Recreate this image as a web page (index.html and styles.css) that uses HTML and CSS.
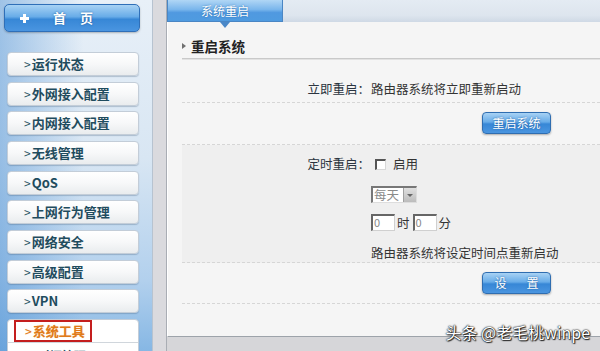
FILE: index.html
```html
<!DOCTYPE html>
<html lang="zh-CN">
<head>
<meta charset="utf-8">
<title>系统重启</title>
<link rel="stylesheet" href="styles.css">
</head>
<body>
<div class="page">
  <aside class="sidebar">
    <div class="home"><span class="plus"></span><span class="home-text">首<span class="sp"></span>页</span></div>
    <ul class="menu">
      <li class="item"><span class="arr">&gt;</span>运行状态</li>
      <li class="item"><span class="arr">&gt;</span>外网接入配置</li>
      <li class="item"><span class="arr">&gt;</span>内网接入配置</li>
      <li class="item"><span class="arr">&gt;</span>无线管理</li>
      <li class="item"><span class="arr">&gt;</span>QoS</li>
      <li class="item"><span class="arr">&gt;</span>上网行为管理</li>
      <li class="item"><span class="arr">&gt;</span>网络安全</li>
      <li class="item"><span class="arr">&gt;</span>高级配置</li>
      <li class="item"><span class="arr">&gt;</span>VPN</li>
      <li class="item item-open">
        <div class="open-head"><span class="hl"><span class="arr">&gt;</span>系统工具</span></div>
        <div class="sub">时间管理</div>
      </li>
    </ul>
  </aside>
  <div class="gutter"></div>
  <main class="main">
    <div class="topbar"><div class="tab">系统重启</div><span class="tab-tip"></span></div>
    <div class="panel">
      <h2 class="heading"><span class="tri"></span>重启系统</h2>
      <div class="row row-a"><span class="label">立即重启：</span><span class="value">路由器系统将立即重新启动</span></div>
      <div class="row row-btn"><span class="label"></span><span class="value"><span class="btn">重启系统</span></span></div>
      <div class="row row-c">
        <span class="label lbl-c">定时重启：</span>
        <div class="value col">
          <div class="line"><span class="check"></span>启用</div>
          <div class="select"><span class="sel-text">每天</span><span class="sel-btn"><span class="sel-arr"></span></span></div>
          <div class="line times"><span class="inp">0</span>时<span class="inp">0</span>分</div>
          <div class="line note">路由器系统将设定时间点重新启动</div>
        </div>
      </div>
      <div class="row row-btn row-d"><span class="label"></span><span class="value"><span class="btn btn-wide">设<span class="bsp"></span>置</span></span></div>
      <div class="mark">头条 @老毛桃winpe</div>
    </div>
    <div class="foot"></div>
  </main>
</div>
</body>
</html>
```
FILE: styles.css
```css
* { box-sizing: border-box; }
html, body { margin: 0; padding: 0; }
body {
  width: 600px;
  height: 351px;
  overflow: hidden;
  font-family: "Noto Sans CJK SC", "Liberation Sans", sans-serif;
  font-size: 12.5px;
  color: #333;
  background: #d6d6da;
}
.page { display: flex; height: 351px; }

/* sidebar */
.sidebar {
  width: 153px;
  flex: none;
  padding: 4px 0 0 4px;
  background: linear-gradient(90deg, rgba(70,140,210,0.45) 0%, rgba(70,140,210,0) 55%),
              linear-gradient(180deg, #e8f0f8 0%, #d8e6f3 45%, #b2d0ed 80%, #86b7e4 100%);
  border-right: 1px solid #b7c3d0;
  overflow: hidden;
}
.home {
  width: 136px;
  height: 28px;
  border: 1px solid #2f6fb8;
  border-radius: 5px;
  background: linear-gradient(180deg, #a8d2f4 0%, #68ace8 45%, #3787d6 55%, #4a95e0 100%);
  display: flex;
  align-items: center;
  padding-left: 15px;
  color: #fff;
  font-weight: bold;
  font-size: 13px;
  text-shadow: 0 0 2px #1d5a9a;
  box-shadow: 0 1px 2px rgba(0,0,0,0.25);
}
.plus {
  width: 9px; height: 9px; flex: none;
  background: linear-gradient(#fff, #fff) center/9px 3px no-repeat,
              linear-gradient(#fff, #fff) center/3px 9px no-repeat;
}
.home-text { margin-left: 24px; display: flex; line-height: 14px; }
.sp { display: inline-block; width: 14px; }

.menu {
  list-style: none;
  margin: 20px 0 0 3px;
  padding: 0;
  display: flex;
  flex-direction: column;
  gap: 5.67px;
}
.item {
  width: 132px;
  height: 24px;
  border: 1px solid #c3cdd8;
  border-radius: 4px;
  background: linear-gradient(180deg, #ffffff 0%, #f7f8f9 50%, #e9ecee 100%);
  box-shadow: 0 1px 1px rgba(60,90,120,0.3);
  padding-left: 16px;
  display: flex;
  align-items: center;
  color: #1f4c5e;
  font-weight: bold;
  font-size: 13px;
  line-height: 16px;
}
.arr { font-weight: normal; font-size: 12px; margin-right: 1px; color: #2a5565; }
.item-open {
  height: 60px;
  display: block;
  padding-left: 0;
  background: #fff;
}
.open-head {
  height: 23px;
  border-bottom: 1px solid #d0d6dc;
  padding-left: 6px;
  display: flex;
  align-items: center;
}
.hl {
  display: flex;
  align-items: center;
  height: 22px;
  width: 78px;
  border: 2px solid #c41e1e;
  padding-left: 9px;
  color: #e07a1a;
  text-shadow: 0 0 1px #f6c690;
}
.hl .arr { color: #e07a1a; }
.sub { padding: 5px 0 0 30px; color: #1f4c5e; line-height: 16px; font-size: 12px; }

.gutter {
  width: 14px;
  flex: none;
  background: #dadade;
  border-right: 1px solid #a9adb4;
}

/* main */
.main { flex: 1; display: flex; flex-direction: column; min-width: 0; }
.topbar {
  height: 22px;
  flex: none;
  background: linear-gradient(180deg, #e4ebf3 0%, #dde5ee 70%, #cfd9e5 100%);
  position: relative;
  z-index: 2;
}
.tab {
  width: 116px;
  height: 22px;
  background: linear-gradient(180deg, #b0d6f5 0%, #7ab6ec 45%, #5099e0 60%, #4f9be0 100%);
  border: 1px solid #4a86c4;
  border-top: none;
  color: #fff;
  font-size: 12px;
  line-height: 21px;
  text-align: center;
  text-shadow: 0 0 2px #2a6aa8;
}
.tab-tip {
  position: absolute;
  left: 53px;
  top: 22px;
  width: 0; height: 0;
  border-left: 5px solid transparent;
  border-right: 5px solid transparent;
  border-top: 6px solid #4a88c8;
}
.panel {
  height: 315px;
  flex: none;
  background: #f5f5f5;
  border-left: 1px solid #ffffff;
  border-bottom: 1px solid #9da3aa;
  padding-left: 14px;
  position: relative;
  z-index: 1;
}
.heading {
  margin: 0;
  height: 37px;
  padding-top: 16px;
  font-size: 13.5px;
  font-weight: bold;
  line-height: 16px;
  color: #222;
  display: flex;
  align-items: flex-start;
  border-bottom: 1px solid #c9c9c9;
  box-shadow: 0 1px 0 #e2e2e2;
}
.tri {
  width: 0; height: 0;
  border-top: 3.5px solid transparent;
  border-bottom: 3.5px solid transparent;
  border-left: 4px solid #707070;
  margin: 5px 5px 0 0;
}
.row {
  display: grid;
  grid-template-columns: 188px 1fr;
  border-bottom: 1px dashed #d6d6d6;
  line-height: 16px;
}
.label { text-align: right; color: #2b3440; }
.value { padding-left: 1px; }
.row-a { margin-top: 2px; height: 42px; padding-top: 20px; }
.row-btn { height: 42px; padding-top: 9px; }
.btn {
  display: inline-flex;
  align-items: center;
  justify-content: center;
  width: 69px;
  height: 22px;
  margin-left: 111px;
  border: 1px solid #2f6db0;
  border-radius: 4px;
  background: linear-gradient(180deg, #a8d2f4 0%, #68ace8 45%, #3787d6 55%, #4a95e0 100%);
  color: #fff;
  font-size: 12px;
  text-shadow: 0 0 2px #1d5a9a;
  box-shadow: 0 1px 2px rgba(0,0,0,0.3);
}
.bsp { display: inline-block; width: 20px; }
.row-c { height: 118px; background: #efefef; padding-top: 11px; }
.col { display: flex; flex-direction: column; align-items: flex-start; }
.line { display: flex; align-items: center; height: 16px; }
.check {
  width: 11px; height: 11px;
  margin: 0 7px 0 4px;
  background: #fff;
  border-top: 2px solid #555;
  border-left: 2px solid #555;
  border-right: 1px solid #d8d8d8;
  border-bottom: 1px solid #d8d8d8;
}
.select {
  margin-top: 14px;
  width: 46px; height: 17px;
  display: flex;
  border-top: 2px solid #777;
  border-left: 2px solid #777;
  border-right: 1px solid #ddd;
  border-bottom: 1px solid #ddd;
  background: #fff;
}
.sel-text { flex: 1; color: #8a8a8a; font-size: 12.5px; line-height: 14px; padding-left: 1px; }
.sel-btn {
  width: 13px;
  background: linear-gradient(180deg, #e0e0e0, #bcbcbc);
  border-left: 1px solid #a0a0a0;
  display: flex; align-items: center; justify-content: center;
}
.sel-arr {
  width: 0; height: 0;
  border-left: 3px solid transparent;
  border-right: 3px solid transparent;
  border-top: 3px solid #666;
}
.times { margin-top: 11px; height: 17px; }
.inp {
  width: 24px; height: 17px;
  border-top: 2px solid #666;
  border-left: 2px solid #666;
  border-right: 1px solid #d0d0d0;
  border-bottom: 1px solid #d0d0d0;
  background: #fff;
  color: #888;
  font-size: 11px;
  line-height: 13px;
  padding-left: 1px;
  margin-right: 2px;
}
.times .inp:nth-child(2) { margin-left: 3px; }
.note { margin-top: 14px; }
.row-d { height: 41px; }
.mark {
  position: absolute;
  right: 10px;
  bottom: -6px;
  font-size: 16px;
  line-height: 20px;
  color: #fff;
  text-shadow: 0 0 1px #000, 0 0 2px #000, 1px 1px 1px #333;
}
.foot { flex: 1; background: #d6d6d9; }
```
